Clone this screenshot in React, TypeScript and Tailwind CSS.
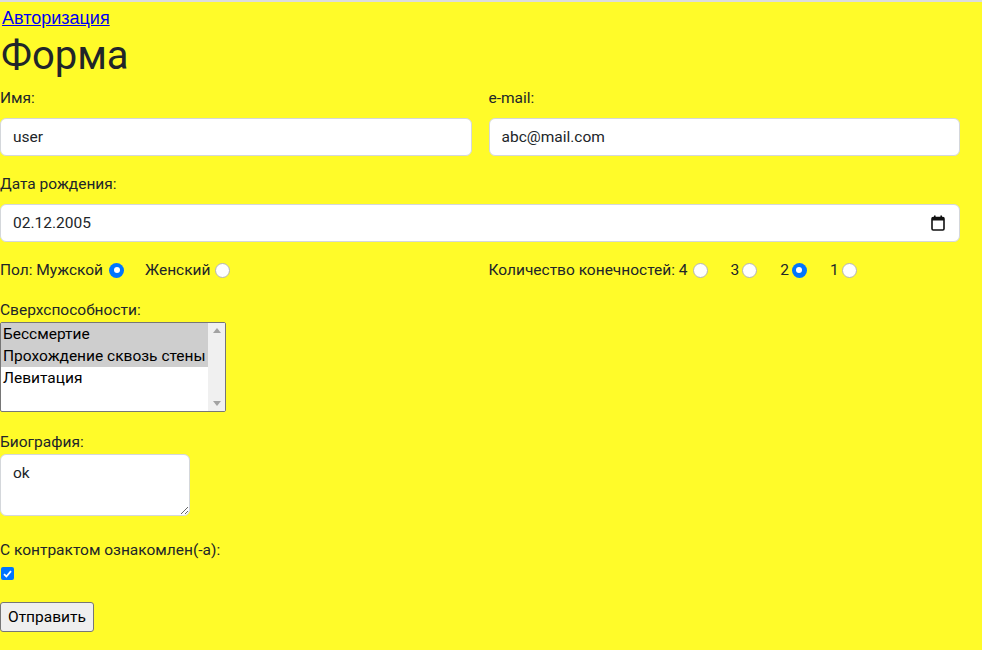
import { useState } from "react";

type RadioProps = { checked?: boolean };

function Radio({ checked }: RadioProps) {
  if (checked) {
    return (
      <span className="inline-flex h-[15px] w-[15px] items-center justify-center rounded-full bg-[#0075ff]">
        <span className="h-[6px] w-[6px] rounded-full bg-white" />
      </span>
    );
  }
  return <span className="inline-block h-[15px] w-[15px] rounded-full border border-[#b5b5b5] bg-white" />;
}

function CalendarIcon() {
  return (
    <svg width="14" height="16" viewBox="0 0 14 16" fill="none">
      <rect x="3" y="0.5" width="1.6" height="3" fill="#111" />
      <rect x="9.4" y="0.5" width="1.6" height="3" fill="#111" />
      <rect x="1" y="2.5" width="12" height="12.5" rx="1.2" stroke="#111" strokeWidth="1.6" />
      <rect x="1" y="2.5" width="12" height="3" fill="#111" />
    </svg>
  );
}

export default function App() {
  const [bio, setBio] = useState("ok");

  return (
    <div className="min-h-screen border-t-2 border-[#dcdcdc] bg-[#fffb29] font-['Segoe_UI',Roboto,'Noto_Sans',sans-serif] text-[15.5px] leading-[24px] text-[#212529]">
      <a href="#" className="ml-[2px] block w-fit pt-[3px] font-['Liberation_Sans',Arial,sans-serif] text-[18px] leading-[27px] text-[#0000ee] underline">
        Авторизация
      </a>
      <h1 className="mb-[6px] pl-[1px] text-[40px] font-normal leading-[48px]">Форма</h1>

      <form className="w-[960px]" onSubmit={(e) => e.preventDefault()}>
        <div className="grid grid-cols-2 gap-x-[17px]">
          <div className="mb-4">
            <label className="mb-2 block">Имя:</label>
            <div className="flex h-[38px] items-center rounded-[6px] border border-[#d4d7db] bg-white px-3">user</div>
          </div>
          <div className="mb-4">
            <label className="mb-2 block">e-mail:</label>
            <div className="flex h-[38px] items-center rounded-[6px] border border-[#d4d7db] bg-white px-3">abc@mail.com</div>
          </div>
        </div>

        <div className="mb-4">
          <label className="mb-2 block">Дата рождения:</label>
          <div className="flex h-[38px] items-center justify-between rounded-[6px] border border-[#d4d7db] bg-white pl-3 pr-[14px]">
            <span>02.12.2005</span>
            <CalendarIcon />
          </div>
        </div>

        <div className="mb-4 grid grid-cols-2 gap-x-[17px]">
          <div className="flex items-center">
            <span>Пол: Мужской</span>
            <span className="ml-[6px] flex"><Radio checked /></span>
            <span className="ml-[21px]">Женский</span>
            <span className="ml-[5px] flex"><Radio /></span>
          </div>
          <div className="flex items-center">
            <span>Количество конечностей: 4</span>
            <span className="ml-[5px] flex"><Radio /></span>
            <span className="ml-[23px]">3</span>
            <span className="ml-[3px] flex"><Radio /></span>
            <span className="ml-[23px]">2</span>
            <span className="ml-[3px] flex"><Radio checked /></span>
            <span className="ml-[23px]">1</span>
            <span className="ml-[3px] flex"><Radio /></span>
          </div>
        </div>

        <div className="mb-[18px]">
          <label className="block">Сверхспособности:</label>
          <div className="flex h-[90px] w-[226px] overflow-hidden rounded-[2px] border border-[#767676] bg-white leading-[22px] text-black">
            <div className="flex-1 whitespace-nowrap">
              <div className="bg-[#cecece] pl-[2px]">Бессмертие</div>
              <div className="bg-[#cecece] pl-[2px]">Прохождение сквозь стены</div>
              <div className="pl-[2px]">Левитация</div>
            </div>
            <div className="flex w-[17px] flex-col items-center justify-between bg-[#f0f0f0] py-[5px]">
              <svg width="8" height="5" viewBox="0 0 8 5"><path d="M0 5 L4 0 L8 5 Z" fill="#a3a3a3" /></svg>
              <svg width="8" height="5" viewBox="0 0 8 5"><path d="M0 0 L4 5 L8 0 Z" fill="#a3a3a3" /></svg>
            </div>
          </div>
        </div>

        <div className="mb-4">
          <label className="block">Биография:</label>
          <textarea
            value={bio}
            onChange={(e) => setBio(e.target.value)}
            className="block h-[62px] w-[190px] rounded-[6px] border border-[#d4d7db] bg-white px-3 py-[6px] text-[#212529] outline-none"
          />
        </div>

        <div className="mt-[22px] mb-[22px]">
          <label className="block">С контрактом ознакомлен(-а):</label>
          <span className="ml-[1px] mt-[5px] flex h-[13px] w-[13px] items-center justify-center rounded-[2px] bg-[#0075ff]">
            <svg width="9" height="8" viewBox="0 0 9 8"><path d="M1 4.2 L3.4 6.5 L8 1.2" stroke="white" strokeWidth="1.8" fill="none" /></svg>
          </span>
        </div>

        <button
          type="submit"
          className="h-[30px] rounded-[3px] border border-[#767676] bg-[#efefef] px-[7px] leading-[24px] text-black"
        >
          Отправить
        </button>
      </form>
    </div>
  );
}
